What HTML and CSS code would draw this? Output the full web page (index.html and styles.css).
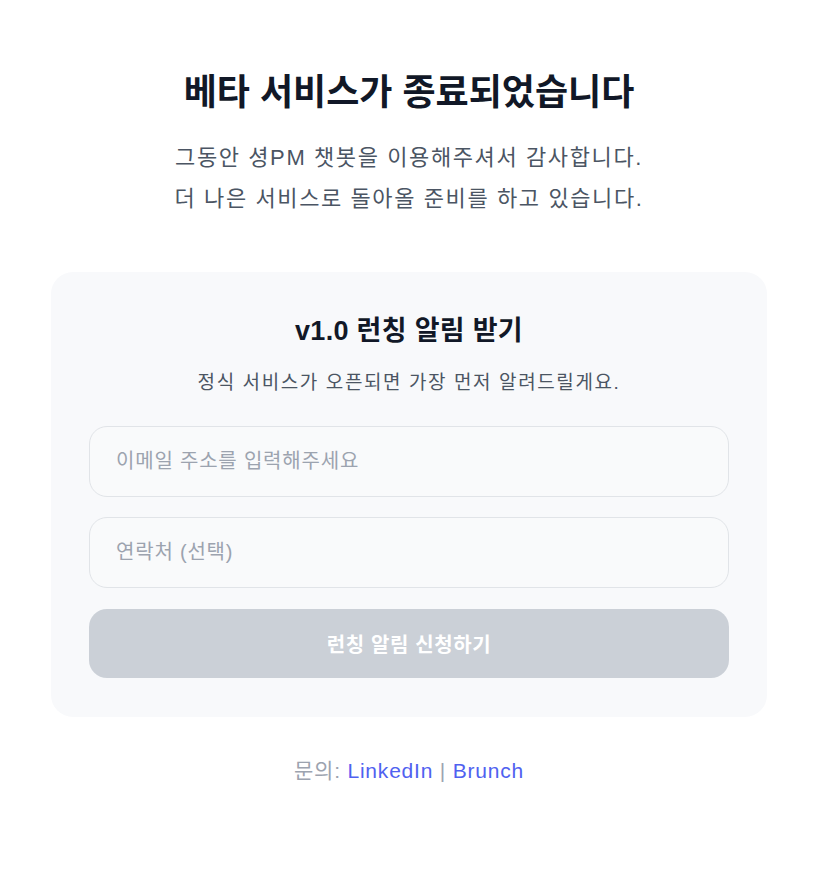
FILE: index.html
```html
<!DOCTYPE html>
<html lang="ko">
  <head>
    <meta charset="UTF-8" />
    <meta name="viewport" content="width=device-width, initial-scale=1.0" />
    <title>서비스 종료 안내</title>
    <link rel="stylesheet" href="styles.css">
  </head>
  <body>
    <main class="wrap">
      <header class="intro">
        <h1>베타 서비스가 종료되었습니다</h1>
        <p>그동안 셩PM 챗봇을 이용해주셔서 감사합니다.<br />더 나은 서비스로 돌아올 준비를 하고 있습니다.</p>
      </header>

      <section class="card">
        <h2>v1.0 런칭 알림 받기</h2>
        <p class="card-desc">정식 서비스가 오픈되면 가장 먼저 알려드릴게요.</p>
        <form class="notify" onsubmit="event.preventDefault()">
          <input type="email" placeholder="이메일 주소를 입력해주세요" />
          <input type="tel" placeholder="연락처 (선택)" />
          <button type="submit" disabled>런칭 알림 신청하기</button>
        </form>
      </section>

      <footer class="contact">
        문의: <a href="#">LinkedIn</a> | <a href="#">Brunch</a>
      </footer>
    </main>
  </body>
</html>
```

FILE: styles.css
```css
* {
  margin: 0;
  padding: 0;
  box-sizing: border-box;
}

body {
  font-family: "Liberation Sans", "Noto Sans CJK KR", sans-serif;
  background: #ffffff;
  color: #111827;
  padding-right: 14px;
}

.wrap {
  max-width: 716px;
  margin: 0 auto;
  padding-top: 70px;
}

.intro {
  text-align: center;
}

.intro h1 {
  font-size: 36px;
  font-weight: 700;
  line-height: 1.3;
  color: #111827;
}

.intro p {
  margin-top: 20px;
  font-size: 22px;
  letter-spacing: 1.6px;
  line-height: 41px;
  color: #4b5563;
}

.card {
  margin-top: 53px;
  background: #f8f9fb;
  border-radius: 22px;
  padding: 41px 38px 39px;
  text-align: center;
}

.card h2 {
  font-size: 27px;
  font-weight: 700;
  line-height: 36px;
  letter-spacing: 0.3px;
  color: #111827;
}

.card-desc {
  margin-top: 19px;
  font-size: 19px;
  letter-spacing: 1.6px;
  line-height: 30px;
  color: #4b5563;
}

.notify {
  margin-top: 28px;
  display: flex;
  flex-direction: column;
  gap: 20px;
}

.notify input {
  height: 71px;
  padding: 0 26px;
  font-family: inherit;
  font-size: 20px;
  letter-spacing: 0.8px;
  color: #111827;
  background: #f9fafb;
  border: 1px solid #e1e4e8;
  border-radius: 18px;
  outline: none;
}

.notify input::placeholder {
  color: #9ca3af;
}

.notify button {
  margin-top: 1px;
  height: 69px;
  font-family: inherit;
  font-size: 20px;
  font-weight: 700;
  letter-spacing: 0.6px;
  color: #ffffff;
  background: #cbd0d7;
  border: none;
  border-radius: 18px;
}

.contact {
  margin-top: 39px;
  text-align: center;
  font-size: 21px;
  letter-spacing: 0.8px;
  line-height: 30px;
  color: #9ca3af;
}

.contact a {
  color: #5061f0;
  text-decoration: none;
}
```
